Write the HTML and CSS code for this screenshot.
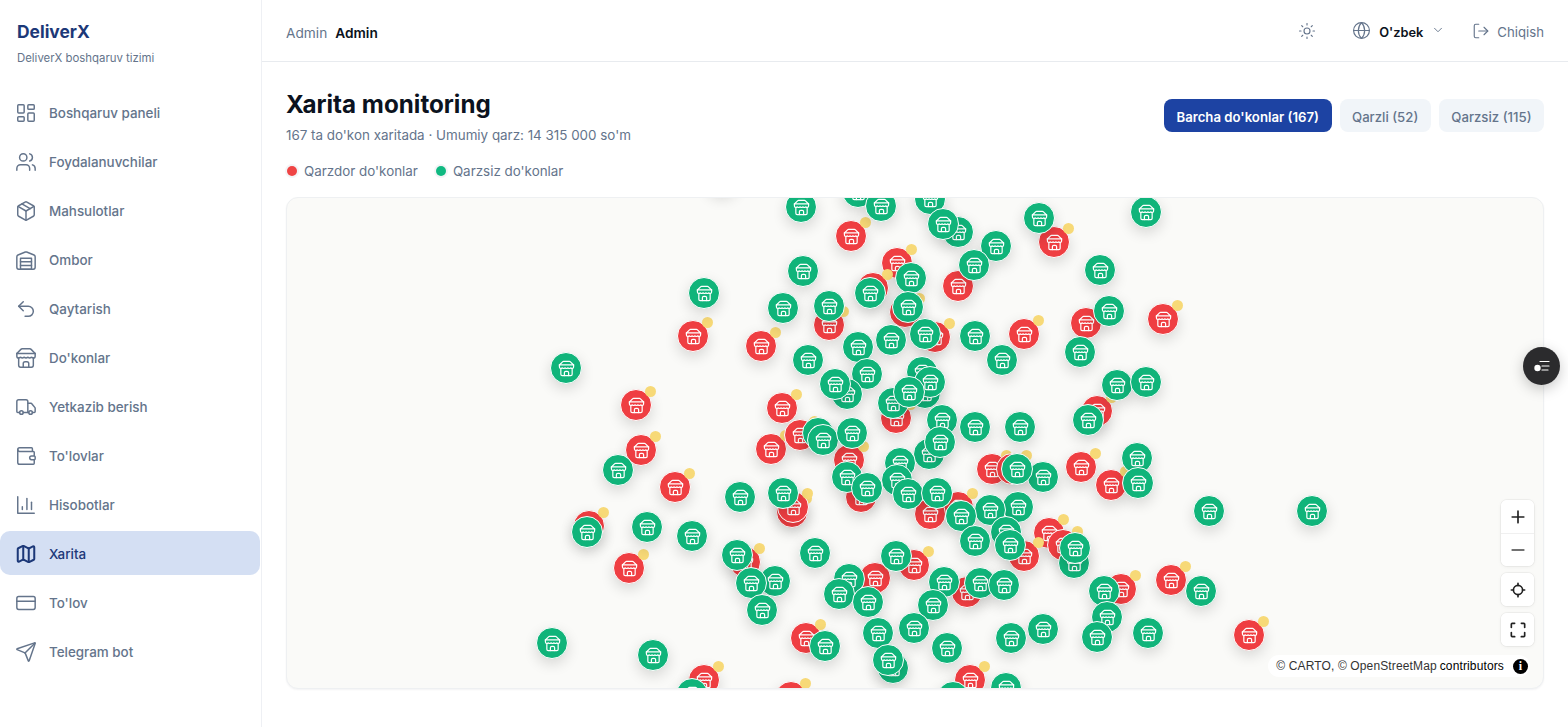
FILE: index.html
```html
<!DOCTYPE html>
<html lang="uz">
<head>
<meta charset="utf-8">
<title>Xarita monitoring</title>
<link rel="stylesheet" href="styles.css">
</head>
<body>
<svg class="sprite" aria-hidden="true"><symbol id="store" viewBox="0 0 24 24"><path d="m2 7 4.41-4.41A2 2 0 0 1 7.83 2h8.34a2 2 0 0 1 1.42.59L22 7"/><path d="M4 12v8a2 2 0 0 0 2 2h12a2 2 0 0 0 2-2v-8"/><path d="M15 22v-4a2 2 0 0 0-2-2h-2a2 2 0 0 0-2 2v4"/><path d="M2 7h20"/><path d="M22 7v3a2 2 0 0 1-2 2 2.7 2.7 0 0 1-1.59-.63.7.7 0 0 0-.82 0A2.7 2.7 0 0 1 16 12a2.7 2.7 0 0 1-1.59-.63.7.7 0 0 0-.82 0A2.7 2.7 0 0 1 12 12a2.7 2.7 0 0 1-1.59-.63.7.7 0 0 0-.82 0A2.7 2.7 0 0 1 8 12a2.7 2.7 0 0 1-1.59-.63.7.7 0 0 0-.82 0A2.7 2.7 0 0 1 4 12a2 2 0 0 1-2-2V7"/></symbol></svg>
<div class="app">
  <aside class="sidebar">
    <div class="brand">
      <div class="brand-name">DeliverX</div>
      <div class="brand-sub">DeliverX boshqaruv tizimi</div>
    </div>
    <nav class="nav">
      <a class="nav-item"><svg class="icon nav-icon" viewBox="0 0 24 24"><rect width="7" height="9" x="3" y="3" rx="1"/><rect width="7" height="5" x="14" y="3" rx="1"/><rect width="7" height="9" x="14" y="12" rx="1"/><rect width="7" height="5" x="3" y="16" rx="1"/></svg>Boshqaruv paneli</a>
      <a class="nav-item"><svg class="icon nav-icon" viewBox="0 0 24 24"><path d="M16 21v-2a4 4 0 0 0-4-4H6a4 4 0 0 0-4 4v2"/><circle cx="9" cy="7" r="4"/><path d="M22 21v-2a4 4 0 0 0-3-3.87"/><path d="M16 3.13a4 4 0 0 1 0 7.75"/></svg>Foydalanuvchilar</a>
      <a class="nav-item"><svg class="icon nav-icon" viewBox="0 0 24 24"><path d="m7.5 4.27 9 5.15"/><path d="M21 8a2 2 0 0 0-1-1.73l-7-4a2 2 0 0 0-2 0l-7 4A2 2 0 0 0 3 8v8a2 2 0 0 0 1 1.73l7 4a2 2 0 0 0 2 0l7-4A2 2 0 0 0 21 16Z"/><path d="m3.3 7 8.7 5 8.7-5"/><path d="M12 22V12"/></svg>Mahsulotlar</a>
      <a class="nav-item"><svg class="icon nav-icon" viewBox="0 0 24 24"><path d="M22 8.35V20a2 2 0 0 1-2 2H4a2 2 0 0 1-2-2V8.35A2 2 0 0 1 3.26 6.5l8-3.2a2 2 0 0 1 1.48 0l8 3.2A2 2 0 0 1 22 8.35Z"/><path d="M6 18h12"/><path d="M6 14h12"/><rect width="12" height="12" x="6" y="10"/></svg>Ombor</a>
      <a class="nav-item"><svg class="icon nav-icon" viewBox="0 0 24 24"><path d="M9 14 4 9l5-5"/><path d="M4 9h10.5a5.5 5.5 0 0 1 5.5 5.5 5.5 5.5 0 0 1-5.5 5.5H11"/></svg>Qaytarish</a>
      <a class="nav-item"><svg class="icon nav-icon"><use href="#store"/></svg>Do'konlar</a>
      <a class="nav-item"><svg class="icon nav-icon" viewBox="0 0 24 24"><path d="M14 18V6a2 2 0 0 0-2-2H4a2 2 0 0 0-2 2v11a1 1 0 0 0 1 1h2"/><path d="M15 18H9"/><path d="M19 18h2a1 1 0 0 0 1-1v-3.65a1 1 0 0 0-.22-.624l-3.48-4.35A1 1 0 0 0 17.52 8H14"/><circle cx="17" cy="18" r="2"/><circle cx="7" cy="18" r="2"/></svg>Yetkazib berish</a>
      <a class="nav-item"><svg class="icon nav-icon" viewBox="0 0 24 24"><path d="M19 7V4a1 1 0 0 0-1-1H5a2 2 0 0 0 0 4h15a1 1 0 0 1 1 1v4h-3a2 2 0 0 0 0 4h3a1 1 0 0 0 1-1v-2a1 1 0 0 0-1-1"/><path d="M3 5v14a2 2 0 0 0 2 2h15a1 1 0 0 0 1-1v-4"/></svg>To'lovlar</a>
      <a class="nav-item"><svg class="icon nav-icon" viewBox="0 0 24 24"><path d="M3 3v18h18"/><path d="M18 17V9"/><path d="M13 17V5"/><path d="M8 17v-3"/></svg>Hisobotlar</a>
      <a class="nav-item active"><svg class="icon nav-icon" viewBox="0 0 24 24"><path d="M14.106 5.553a2 2 0 0 0 1.788 0l3.659-1.83A1 1 0 0 1 21 4.619v12.764a1 1 0 0 1-.553.894l-4.553 2.277a2 2 0 0 1-1.788 0l-4.212-2.106a2 2 0 0 0-1.788 0l-3.659 1.83A1 1 0 0 1 3 19.381V6.618a1 1 0 0 1 .553-.894l4.553-2.277a2 2 0 0 1 1.788 0z"/><path d="M15 5.764v15"/><path d="M9 3.236v15"/></svg>Xarita</a>
      <a class="nav-item"><svg class="icon nav-icon" viewBox="0 0 24 24"><rect width="20" height="14" x="2" y="5" rx="2"/><path d="M2 10h20"/></svg>To'lov</a>
      <a class="nav-item"><svg class="icon nav-icon" viewBox="0 0 24 24"><path d="M14.536 21.686a.5.5 0 0 0 .937-.024l6.5-19a.496.496 0 0 0-.635-.635l-19 6.5a.5.5 0 0 0-.024.937l7.93 3.18a2 2 0 0 1 1.112 1.11z"/><path d="m21.854 2.147-10.94 10.939"/></svg>Telegram bot</a>
    </nav>
  </aside>
  <div class="content">
    <header class="topbar">
      <div class="crumbs"><span class="crumb-role">Admin</span><span class="crumb-name">Admin</span></div>
      <div class="top-actions">
        <svg class="icon sun" viewBox="0 0 24 24"><circle cx="12" cy="12" r="4"/><path d="M12 2v2"/><path d="M12 20v2"/><path d="m4.93 4.93 1.41 1.41"/><path d="m17.66 17.66 1.41 1.41"/><path d="M2 12h2"/><path d="M20 12h2"/><path d="m6.34 17.66-1.41 1.41"/><path d="m19.07 4.93-1.41 1.41"/></svg>
        <div class="lang">
          <svg class="icon globe" viewBox="0 0 24 24"><circle cx="12" cy="12" r="10"/><path d="M12 2a14.5 14.5 0 0 0 0 20 14.5 14.5 0 0 0 0-20"/><path d="M2 12h20"/></svg>
          <span class="lang-name">O'zbek</span>
          <svg class="icon chevron" viewBox="0 0 24 24"><path d="m6 9 6 6 6-6"/></svg>
        </div>
        <div class="logout">
          <svg class="icon logout-icon" viewBox="0 0 24 24"><path d="M9 21H5a2 2 0 0 1-2-2V5a2 2 0 0 1 2-2h4"/><path d="m16 17 5-5-5-5"/><path d="M21 12H9"/></svg>
          <span class="logout-label">Chiqish</span>
        </div>
      </div>
    </header>
    <main class="main">
      <div class="page-head">
        <div>
          <h1 class="title">Xarita monitoring</h1>
          <p class="subtitle">167 ta do'kon xaritada · Umumiy qarz: 14 315 000 so'm</p>
        </div>
        <div class="filters">
          <button class="filter selected">Barcha do'konlar (167)</button>
          <button class="filter">Qarzli (52)</button>
          <button class="filter">Qarzsiz (115)</button>
        </div>
      </div>
      <div class="legend">
        <span class="legend-item"><i class="legend-dot red"></i>Qarzdor do'konlar</span>
        <span class="legend-item"><i class="legend-dot green"></i>Qarzsiz do'konlar</span>
      </div>
      <section class="map" id="map">
        <div class="controls">
          <div class="ctrl-group">
            <button class="ctrl"><svg class="ctrl-icon" viewBox="0 0 24 24"><path d="M12 5v14M5 12h14"/></svg></button>
            <button class="ctrl"><svg class="ctrl-icon muted" viewBox="0 0 24 24"><path d="M5 12h14"/></svg></button>
          </div>
          <div class="ctrl-group"><button class="ctrl"><svg class="ctrl-icon" viewBox="0 0 24 24"><circle cx="12" cy="12" r="5.5"/><path d="M12 4v2.5M12 17.5V20M4 12h2.5M17.5 12H20"/></svg></button></div>
          <div class="ctrl-group"><button class="ctrl"><svg class="ctrl-icon" viewBox="0 0 24 24"><path d="M4 9V5a1 1 0 0 1 1-1h3M16 4h3a1 1 0 0 1 1 1v4M20 15v4a1 1 0 0 1-1 1h-3M8 20H5a1 1 0 0 1-1-1v-4"/></svg></button></div>
        </div>
        <div class="attribution"><span class="attr-soft">© CARTO, © OpenStreetMap</span> contributors<span class="attr-info">i</span></div>
      </section>
    </main>
  </div>
  <button class="fab" aria-label="Filtr"><svg class="fab-icon" viewBox="0 0 20 20"><path d="M8 5.5h9M10 10h7M10 14h6"/><circle cx="5.5" cy="12" r="3.2"/></svg></button>
</div>
<script src="markers.js"></script>
</body>
</html>
```

FILE: styles.css
```css
* { box-sizing: border-box; }
html, body { margin: 0; height: 100%; overflow: hidden; }
body { font-family: Inter, "Noto Sans", sans-serif; background: #fff; color: #0b1220; }
.sprite { display: none; }
.app { display: flex; height: 727px; position: relative; }
.icon { fill: none; stroke: currentColor; stroke-width: 1.75; stroke-linecap: round; stroke-linejoin: round; flex: none; }

.sidebar { width: 262px; flex: none; border-right: 1px solid #eef0f4; display: flex; flex-direction: column; }
.brand { padding: 21px 17px 0; height: 90px; }
.brand-name { font-size: 17.4px; line-height: 22px; font-weight: 700; color: #1c3878; }
.brand-sub { margin-top: 7px; font-size: 11.4px; line-height: 16px; color: #64748b; }
.nav { display: flex; flex-direction: column; gap: 5px; padding-right: 1px; }
.nav-item { height: 44px; display: flex; align-items: center; gap: 12px; padding: 2px 0 0 15px; font-size: 13.4px; font-weight: 500; color: #64748b; border-radius: 10px; }
.nav-icon { width: 22px; height: 22px; stroke-width: 1.6; }
.nav-item.active { background: #d4dff3; color: #1c3878; }
.nav-item.active .nav-icon { stroke-width: 2.2; }

.content { flex: 1; min-width: 0; display: flex; flex-direction: column; }
.topbar { height: 62px; flex: none; border-bottom: 1px solid #e8ebef; display: flex; align-items: center; justify-content: space-between; padding: 0 24px; }
.crumbs { display: flex; gap: 8px; font-size: 13.7px; margin-top: 5px; }
.crumb-role { color: #64748b; }
.crumb-name { color: #0b1220; font-weight: 600; }
.top-actions { display: flex; align-items: center; margin-top: 1px; }
.sun { width: 18px; height: 18px; color: #64748b; stroke-width: 1.5; margin-top: -1px; }
.lang { display: flex; align-items: center; margin-left: 36px; }
.globe { width: 19px; height: 19px; color: #64748b; stroke-width: 1.5; margin-top: -1px; }
.lang-name { margin-left: 8px; padding-top: 2px; font-size: 12.8px; font-weight: 600; color: #0b1220; }
.chevron { width: 14px; height: 14px; margin-left: 8px; margin-top: -2px; color: #64748b; stroke-width: 1.6; }
.logout { display: flex; align-items: center; gap: 7px; margin-left: 27px; font-size: 13.2px; color: #64748b; }
.logout-label { padding-top: 2px; }
.logout-icon { width: 18px; height: 18px; stroke-width: 1.5; margin-top: -1px; }

.main { flex: 1; min-height: 0; display: flex; flex-direction: column; padding: 27px 24px 38px; }
.page-head { display: flex; justify-content: space-between; align-items: flex-start; }
.title { margin: 0; font-size: 24.2px; line-height: 32px; font-weight: 700; color: #0b1220; }
.subtitle { margin: 4px 0 0; font-size: 13.4px; line-height: 20px; color: #64748b; }
.filters { display: flex; gap: 8px; margin-top: 10px; }
.filter { height: 33px; padding: 2px 12.5px 0; border: 0; border-radius: 8px; background: #f1f5f9; color: #64748b; font: 500 13.2px Inter, "Noto Sans", sans-serif; }
.filter.selected { background: #1d43a3; color: #fff; font-weight: 600; }
.legend { display: flex; gap: 17px; margin-top: 16px; font-size: 13.4px; line-height: 20px; color: #64748b; }
.legend-item { display: flex; align-items: center; gap: 7px; }
.legend-dot { width: 10px; height: 10px; margin-left: 1px; border-radius: 50%; box-shadow: 0 0 0 2px rgba(100, 116, 139, .08); }
.legend-dot.red { background: #ef4444; }
.legend-dot.green { background: #10b981; }

.map { position: relative; flex: 1; margin-top: 16px; background: #fafaf8; border: 1px solid #eef0f2; border-radius: 12px; overflow: hidden; box-shadow: 0 1px 2px rgba(15, 23, 42, .05); }
.pin { position: absolute; width: 32px; height: 32px; transform: translate(-50%, -50%); border: 1.5px solid #fff; border-radius: 50%; display: flex; align-items: center; justify-content: center; box-shadow: 0 5px 14px rgba(0, 0, 0, .14); color: #fff; }
.pin.debt { background: #ef3e42; }
.pin.clear { background: #10b47a; }
.pin-icon { width: 17px; height: 17px; fill: none; stroke: #fff; stroke-width: 1.7; stroke-linecap: round; stroke-linejoin: round; }
.pin-dot { position: absolute; top: -4px; right: -5px; width: 11px; height: 11px; border-radius: 50%; background: #f7d977; }

.controls { position: absolute; right: 9px; top: 302px; display: flex; flex-direction: column; gap: 7px; z-index: 5; }
.ctrl-group { width: 33px; background: #fff; border-radius: 6px; box-shadow: 0 0 0 1px rgba(0, 0, 0, .04), 0 1px 4px rgba(0, 0, 0, .05); overflow: hidden; }
.ctrl { display: flex; align-items: center; justify-content: center; width: 33px; height: 33px; border: 0; padding: 0; background: #fff; }
.ctrl + .ctrl { border-top: 1px solid #f0f0f0; }
.ctrl-icon { width: 20px; height: 20px; fill: none; stroke: #222; stroke-width: 2; stroke-linecap: round; stroke-linejoin: round; }
.ctrl-icon.muted { stroke: #444; }
.attribution { position: absolute; right: 13px; bottom: 11px; z-index: 5; height: 22px; padding: 0 2px 0 8px; display: flex; align-items: center; gap: 3px; background: #fff; border-radius: 11px; font: 12px "Liberation Sans", Arial, sans-serif; letter-spacing: .13px; color: #000; }
.attr-soft { color: #333; }
.attr-info { width: 15px; height: 15px; margin-left: 6px; border-radius: 50%; background: #000; color: #fff; font: 700 12px/15px "Liberation Serif", serif; text-align: center; }

.fab { position: absolute; left: 1523px; top: 347px; width: 37px; height: 38px; border: 0; padding: 0; border-radius: 50%; background: #2b2b2d; box-shadow: 0 4px 14px rgba(0, 0, 0, .22); display: flex; align-items: center; justify-content: center; z-index: 10; }
.fab-icon { width: 20px; height: 20px; fill: none; stroke: #fff; stroke-width: 1.2; stroke-linecap: round; }
.fab-icon circle { fill: #fff; stroke: none; }
```

FILE: markers.js
```js
var ORIGIN = [287, 198];
var DEBT = [[851,236],[897,263],[873,288],[958,286],[905,312],[829,325],[693,336],[761,346],[935,337],[1024,334],[1086,323],[1163,319],[1054,242],[1097,411],[636,405],[782,408],[896,418],[641,450],[771,449],[800,435],[849,460],[675,487],[992,469],[1012,469],[1081,467],[1111,485],[861,497],[792,512],[793,507],[958,507],[930,514],[589,526],[629,568],[1049,533],[1063,545],[1024,556],[745,562],[875,578],[914,565],[967,592],[1121,589],[1171,580],[1249,635],[806,638],[970,680],[704,680],[791,697]];
var CLEAR = [[722,178],[801,207],[858,192],[881,206],[930,199],[958,232],[943,224],[1039,218],[1146,212],[996,246],[974,265],[1100,270],[803,271],[911,278],[870,293],[704,293],[783,308],[829,306],[908,307],[1109,311],[925,334],[891,340],[858,347],[975,336],[1002,360],[1080,352],[808,360],[566,368],[922,372],[867,374],[847,394],[835,384],[925,393],[930,382],[1117,385],[1146,382],[893,403],[909,392],[942,420],[975,427],[1020,427],[1088,420],[818,433],[823,440],[852,433],[929,454],[940,442],[1137,458],[1138,483],[1043,477],[1017,469],[900,463],[618,470],[847,477],[897,480],[867,488],[908,494],[937,493],[740,497],[783,493],[1018,507],[990,510],[961,516],[1209,511],[1312,511],[647,527],[587,532],[692,536],[1006,532],[975,541],[1010,545],[1074,563],[1075,548],[737,555],[815,553],[896,556],[775,581],[751,583],[849,579],[839,594],[868,602],[944,582],[980,583],[1004,585],[933,605],[762,610],[1104,591],[1201,591],[1107,617],[914,628],[878,633],[1043,629],[1011,638],[1097,637],[1148,633],[825,646],[947,648],[552,643],[653,655],[893,668],[888,660],[1006,688],[953,697],[692,694]];

var map = document.getElementById('map');
var layer = document.createDocumentFragment();

function addPin(point, kind) {
  var pin = document.createElement('div');
  pin.className = 'pin ' + kind;
  pin.style.left = (point[0] - ORIGIN[0]) + 'px';
  pin.style.top = (point[1] - ORIGIN[1]) + 'px';
  pin.innerHTML = '<svg class="pin-icon"><use href="#store"/></svg>' + (kind === 'debt' ? '<i class="pin-dot"></i>' : '');
  layer.appendChild(pin);
}

DEBT.forEach(function (p) { addPin(p, 'debt'); });
CLEAR.forEach(function (p) { addPin(p, 'clear'); });
map.insertBefore(layer, map.firstChild);
```
